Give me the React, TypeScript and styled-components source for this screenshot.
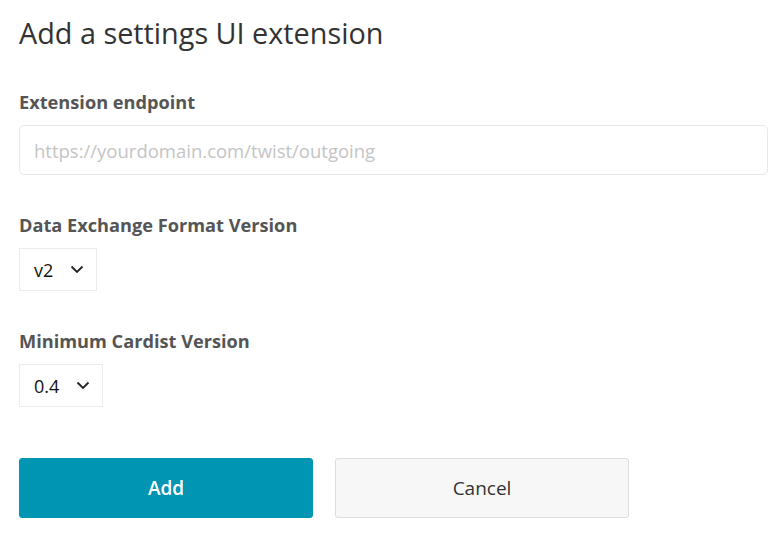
import styled, { createGlobalStyle } from "styled-components";

const GlobalStyle = createGlobalStyle`
  body {
    margin: 0;
    background: #ffffff;
    font-family: "Open Sans", "Noto Sans", sans-serif;
  }
`;

const Page = styled.div`
  padding: 14px 12px 0 19px;
  width: 780px;
  box-sizing: border-box;
`;

const Title = styled.h1`
  margin: 0;
  font-size: 28.8px;
  font-weight: 400;
  color: #333333;
  line-height: 38px;
`;

const Field = styled.div<{ $top: number }>`
  display: flex;
  flex-direction: column;
  align-items: flex-start;
  margin-top: ${(p) => p.$top}px;
`;

const Label = styled.label`
  font-size: 18.2px;
  font-weight: 700;
  color: #555555;
  line-height: 24px;
  margin-bottom: 11px;
`;

const TextInput = styled.input`
  width: 100%;
  height: 50px;
  box-sizing: border-box;
  border: 1px solid #e8e8e8;
  border-radius: 5px;
  padding: 0 14px;
  font-family: inherit;
  font-size: 18.5px;
  color: #333;
  outline: none;

  &::placeholder {
    color: #c4c4c4;
  }
`;

const SelectBox = styled.div`
  display: inline-flex;
  align-items: center;
  gap: 17px;
  height: 43px;
  box-sizing: border-box;
  padding: 0 12px 0 14px;
  border: 1px solid #ebebeb;
  font-size: 18px;
  color: #111;
`;

const Buttons = styled.div`
  display: flex;
  gap: 22px;
  margin-top: 51px;
`;

const Button = styled.button<{ $primary?: boolean }>`
  width: 294px;
  height: 60px;
  border-radius: 3px;
  font-family: inherit;
  font-size: 19px;
  font-weight: ${(p) => (p.$primary ? 600 : 400)};
  color: ${(p) => (p.$primary ? "#ffffff" : "#333333")};
  background: ${(p) => (p.$primary ? "#0095b3" : "#f7f7f7")};
  border: 1px solid ${(p) => (p.$primary ? "#0095b3" : "#dddddd")};
  cursor: pointer;
`;

const Chevron = () => (
  <svg width="14" height="9" viewBox="0 0 14 9" fill="none">
    <path d="M1.5 1.5 L7 7 L12.5 1.5" stroke="#222" strokeWidth="1.8" />
  </svg>
);

const Select = ({ value }: { value: string }) => (
  <SelectBox>
    <span>{value}</span>
    <Chevron />
  </SelectBox>
);

export default function App() {
  return (
    <Page>
      <GlobalStyle />
      <Title>Add a settings UI extension</Title>
      <Field $top={38}>
        <Label>Extension endpoint</Label>
        <TextInput placeholder="https://yourdomain.com/twist/outgoing" />
      </Field>
      <Field $top={38}>
        <Label>Data Exchange Format Version</Label>
        <Select value="v2" />
      </Field>
      <Field $top={38}>
        <Label>Minimum Cardist Version</Label>
        <Select value="0.4" />
      </Field>
      <Buttons>
        <Button $primary>Add</Button>
        <Button>Cancel</Button>
      </Buttons>
    </Page>
  );
}
